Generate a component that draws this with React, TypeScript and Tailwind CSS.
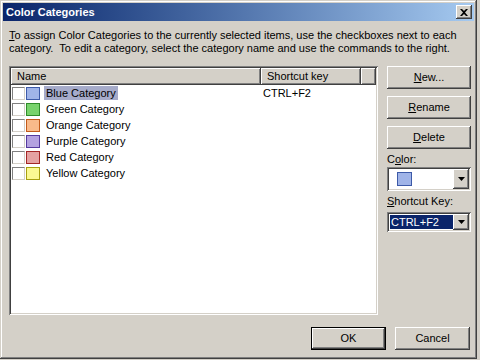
import React from 'react';

const raised =
  'shadow-[inset_-1px_-1px_0_#404040,inset_1px_1px_0_#ffffff,inset_-2px_-2px_0_#808080,inset_2px_2px_0_#d4d0c8]';
const sunken =
  'shadow-[inset_1px_1px_0_#808080,inset_-1px_-1px_0_#ffffff,inset_2px_2px_0_#404040,inset_-2px_-2px_0_#d4d0c8]';

const categories = [
  { name: 'Blue Category', fill: '#a0b4e8', edge: '#3d5aa8', key: 'CTRL+F2' },
  { name: 'Green Category', fill: '#78d36c', edge: '#2f8c2a', key: '' },
  { name: 'Orange Category', fill: '#f9ba8a', edge: '#c25a1a', key: '' },
  { name: 'Purple Category', fill: '#b4a2e0', edge: '#553a9e', key: '' },
  { name: 'Red Category', fill: '#e5a2a2', edge: '#a42626', key: '' },
  { name: 'Yellow Category', fill: '#fbf992', edge: '#a8a010', key: '' },
];

const Arrow: React.FC = () => (
  <svg width="7" height="4" viewBox="0 0 7 4">
    <path d="M0 0H7L3.5 4Z" fill="#000" />
  </svg>
);

const DropButton: React.FC<{ h: string }> = ({ h }) => (
  <div className={`w-[16px] ${h} bg-[#d4d0c8] flex items-center justify-center ${raised}`}>
    <Arrow />
  </div>
);

const PushButton: React.FC<{ children: React.ReactNode }> = ({ children }) => (
  <div className={`h-[23px] w-full bg-[#d4d0c8] flex items-center justify-center ${raised}`}>
    {children}
  </div>
);

export default function App() {
  return (
    <div className="w-[480px] h-[360px] bg-[#d4d0c8] text-[11px] leading-[13px] text-black font-['Liberation_Sans',Arial,sans-serif]">
      <div className="w-[477px] h-[359px] p-[3px] flex flex-col shadow-[inset_-1px_-1px_0_#404040,inset_1px_1px_0_#d4d0c8,inset_-2px_-2px_0_#808080,inset_2px_2px_0_#ffffff]">
        {/* Title bar */}
        <div className="h-[18px] flex items-center justify-between pl-[3px] pr-[2px] bg-gradient-to-r from-[#0a246a] to-[#a6caf0]">
          <span className="text-white font-bold text-[11px]">Color Categories</span>
          <div className={`w-[16px] h-[14px] bg-[#d4d0c8] flex items-center justify-center ${raised}`}>
            <svg width="8" height="7" viewBox="0 0 8 7">
              <path d="M0 0H2L4 2L6 0H8L5 3.5L8 7H6L4 5L2 7H0L3 3.5Z" fill="#000" />
            </svg>
          </div>
        </div>

        <div className="flex-1 flex flex-col pl-[6px] pr-[3px]">
          <p className="mt-[8px]">
            <u>T</u>o assign Color Categories to the currently selected items, use the checkboxes next to each
            <br />
            category.&nbsp; To edit a category, select the category name and use the commands to the right.
          </p>

          <div className="mt-[11px] flex gap-[9px]">
            {/* List */}
            <div className={`w-[369px] h-[249px] bg-white p-[2px] ${sunken}`}>
              <div className="flex h-[17px]">
                <div className={`w-[250px] bg-[#d4d0c8] flex items-center pl-[6px] ${raised}`}>Name</div>
                <div className={`w-[100px] bg-[#d4d0c8] flex items-center pl-[6px] ${raised}`}>Shortcut key</div>
                <div className={`flex-1 bg-[#d4d0c8] ${raised}`} />
              </div>
              {categories.map((c, i) => (
                <div key={c.name} className="flex h-[16px] items-center">
                  <div className="w-[250px] flex items-center pl-[1px]">
                    <div className="w-[13px] h-[13px] bg-white border border-t-[#808080] border-l-[#808080] border-b-[#d4d0c8] border-r-[#d4d0c8]" />
                    <div className="w-[14px] h-[13px] ml-[1px] border" style={{ background: c.fill, borderColor: c.edge }} />
                    <span className={`ml-[4px] px-[2px] h-[14px] flex items-center ${i === 0 ? 'bg-[#a6abca]' : ''}`}>
                      {c.name}
                    </span>
                  </div>
                  <div className="pl-[2px]">{c.key}</div>
                </div>
              ))}
            </div>

            {/* Right column */}
            <div className="w-[84px] flex flex-col">
              <div className="flex flex-col gap-[7px]">
                <PushButton><span><u>N</u>ew...</span></PushButton>
                <PushButton><span><u>R</u>ename</span></PushButton>
                <PushButton><span><u>D</u>elete</span></PushButton>
              </div>
              <div className="mt-[4px]">C<u>o</u>lor:</div>
              <div className={`mt-[1px] h-[24px] bg-white p-[2px] flex ${sunken}`}>
                <div className="flex-1 flex items-center pl-[8px]">
                  <div className="w-[15px] h-[14px] bg-[#a0b4e8] border border-[#3d5aa8]" />
                </div>
                <DropButton h="h-[20px]" />
              </div>
              <div className="mt-[4px]"><u>S</u>hortcut Key:</div>
              <div className={`mt-[4px] h-[20px] bg-white p-[2px] flex ${sunken}`}>
                <div className="flex-1 p-[1px] pr-[0px]">
                  <div className="h-full bg-[#0a246a] text-white flex items-center pl-[1px]">CTRL+F2</div>
                </div>
                <DropButton h="h-[16px]" />
              </div>
            </div>
          </div>

          <div className="mt-[12px] flex justify-end gap-[9px] pr-[1px]">
            <div className="w-[75px] h-[23px] border border-black">
              <div className={`h-full bg-[#d4d0c8] flex items-center justify-center ${raised}`}>OK</div>
            </div>
            <div className={`w-[75px] h-[23px] bg-[#d4d0c8] flex items-center justify-center ${raised}`}>Cancel</div>
          </div>
        </div>
      </div>
    </div>
  );
}
